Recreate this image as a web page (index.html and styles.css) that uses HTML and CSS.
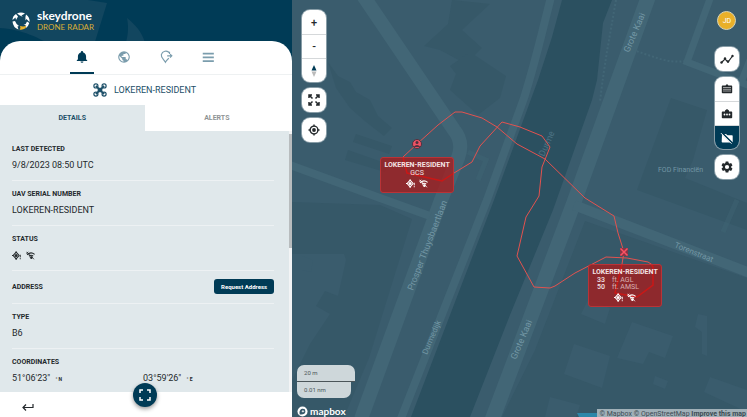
FILE: index.html
```html
<!DOCTYPE html>
<html lang="en">
<head>
    <meta charset="UTF-8">
    <meta name="viewport" content="width=device-width, initial-scale=1.0">
    <title>SkeyDrone - Drone Radar</title>
    <link rel="stylesheet" href="styles.css">
</head>
<body>
    <!-- shared icons -->
    <svg class="sprite" aria-hidden="true">
        <symbol id="icon-gps" viewBox="0 0 24 24">
            <path d="M11 1v3M11 20v3M0 12h3" stroke="currentColor" stroke-width="3" fill="none"/>
            <path d="M11 3l8 9-8 9-8-9z" fill="none" stroke="currentColor" stroke-width="3" stroke-linejoin="round"/>
            <circle cx="11" cy="12" r="4" fill="currentColor"/>
            <path d="M22 10v7M22 19v3" stroke="currentColor" stroke-width="2.5"/>
        </symbol>
        <symbol id="icon-nosignal" viewBox="0 0 24 24">
            <path d="M3 10C9 4 17 4 23 9M8 14c3-3 8-3 11 0" fill="none" stroke="currentColor" stroke-width="3"/>
            <path d="M11 17l3-1.500 3 1.500-3 4zM1 2l20 20" fill="currentColor" stroke="currentColor" stroke-width="2.500"/>
            <path d="M1 7l5-5" stroke="currentColor" stroke-width="2"/>
        </symbol>
    </svg>

    <div class="app">
        <aside class="sidebar">
            <header class="brand">
                <svg class="brand-bg" viewBox="0 0 292 66" preserveAspectRatio="xMinYMin slice" aria-hidden="true">
                    <path d="M0 0H88L107 3 93 48H54C42 38 20 29 0 28z"/>
                    <path d="M127 18C138 27 144 35 146 48H124C128 38 129 28 127 18z"/>
                </svg>
                <svg class="brand-logo" viewBox="0 0 18 18" aria-hidden="true">
                    <g fill="#fff">
                        <path d="M5 1.500Q9-.500 13 1.500L9.500 3.500 11 5Q7 3 5 1.500z"/>
                        <path d="M14 2.500Q18 5 17.500 10L14.500 7 13.500 8.500Q13 5 14 2.500z"/>
                        <path d="M4 2L6 4.500 4 8 3.500 5.500.500 8Q.500 4 4 2z"/>
                        <path d="M.500 9.500L3 9Q4 12 7 14L5.500 14.500 6.500 17.500Q1 15.500.500 9.500z"/>
                        <path d="M17.300 11Q16.500 14 14 16L13.500 13 11.500 13Q14.500 12 15 9.500z"/>
                    </g>
                    <path d="M8 14Q12 15 14.500 13.500L13.500 16.200Q10.500 18.200 7.500 17.500L8.500 16z" fill="#e9b32b"/>
                </svg>
                <div class="brand-text">
                    <span class="brand-name">skeydrone</span>
                    <span class="brand-product">DRONE RADAR</span>
                </div>
            </header>

            <section class="panel">
                <nav class="nav">
                    <button class="nav-item active" aria-label="Notifications">
                        <svg viewBox="0 0 24 24"><path fill="currentColor" d="M12 22a2.500 2.500 0 0 0 2.500-2.500h-5A2.500 2.500 0 0 0 12 22zm7-6v-5c0-3.500-2-6-5-6.800V3.500a2 2 0 0 0-4 0v.7C7 5 5 7.500 5 11v5l-2 2v1h18v-1z"/></svg>
                    </button>
                    <button class="nav-item" aria-label="World">
                        <svg viewBox="0 0 24 24"><path fill="currentColor" d="M12 2a10 10 0 1 0 0 20 10 10 0 0 0 0-20zm-1 17.930A8 8 0 0 1 4.210 10.210L9 15v1a2 2 0 0 0 2 2zm6.900-2.540A2 2 0 0 0 16 16h-1v-3a1 1 0 0 0-1-1H8v-2h2a1 1 0 0 0 1-1V7h2a2 2 0 0 0 2-2v-.410a8 8 0 0 1 2.900 12.800z"/></svg>
                    </button>
                    <button class="nav-item" aria-label="Area">
                        <svg viewBox="0 0 24 24" fill="none" stroke="currentColor" stroke-width="2"><path d="M18 5A8 8 0 0 0 4 8c-1 5 4 8 7 13 2-4 4-5 6-7M14 10h8M19 7l3 3-3 3M18 3v4"/></svg>
                    </button>
                    <button class="nav-item" aria-label="Menu">
                        <svg viewBox="0 0 24 24" stroke="currentColor" stroke-width="3"><path d="M3 6h19M3 12.500h19M3 19h19"/></svg>
                    </button>
                </nav>

                <h1 class="drone-title">
                    <svg viewBox="0 0 24 24" fill="none" stroke="currentColor" stroke-width="2" aria-hidden="true">
                        <circle cx="5" cy="5" r="3.500"/><circle cx="19" cy="5" r="3.500"/>
                        <circle cx="5" cy="19" r="3.500"/><circle cx="19" cy="19" r="3.500"/>
                        <path d="M5 5l14 14M19 5L5 19" stroke-width="3"/>
                        <path d="M9 9h6v6H9z" fill="currentColor"/>
                    </svg>
                    LOKEREN-RESIDENT
                </h1>

                <div class="tabs">
                    <button class="tab selected">DETAILS</button>
                    <button class="tab">ALERTS</button>
                </div>

                <div class="details">
                    <dl class="detail-list">
                        <div class="row">
                            <dt>LAST DETECTED</dt>
                            <dd>9/8/2023 08:50 UTC</dd>
                        </div>
                        <div class="row">
                            <dt>UAV SERIAL NUMBER</dt>
                            <dd>LOKEREN-RESIDENT</dd>
                        </div>
                        <div class="row">
                            <dt>STATUS</dt>
                            <dd class="status">
                                <svg><use href="#icon-gps"/></svg>
                                <svg><use href="#icon-nosignal"/></svg>
                            </dd>
                        </div>
                        <div class="row row-inline">
                            <dt>ADDRESS</dt>
                            <dd><button class="request">Request Address</button></dd>
                        </div>
                        <div class="row">
                            <dt>TYPE</dt>
                            <dd>B6</dd>
                        </div>
                        <div class="row">
                            <dt>COORDINATES</dt>
                            <dd class="coords">
                                <span>51°06'23" <b>° N</b></span>
                                <span>03°59'26" <b>° E</b></span>
                            </dd>
                        </div>
                    </dl>
                    <div class="scrollbar"><div class="thumb"></div></div>
                </div>

                <footer class="footer">
                    <button class="back" aria-label="Back">
                        <svg viewBox="0 0 12 8" fill="none" stroke="currentColor" stroke-width="1.200"><path d="M11 1v3.500H1M4 1.500l-3 3 3 3"/></svg>
                    </button>
                    <button class="focus" aria-label="Focus drone">
                        <svg viewBox="0 0 12 12" fill="none" stroke="currentColor" stroke-width="1.500"><path d="M1 4V1h3M8 1h3v3M11 8v3H8M4 11H1V8"/></svg>
                    </button>
                </footer>
            </section>
        </aside>

        <main class="map">
            <svg class="layer" viewBox="292 0 455 417" preserveAspectRatio="xMinYMin slice">
                <rect x="292" width="455" height="417" fill="#3a5c6d"/>
                <!-- buildings -->
                <g fill="#365868">
                    <path d="M452 0L490 4 462 30 482 48 466 64 440 50 424 46 448 24z"/>
                    <path d="M470 52L506 76 500 98 478 115 450 90 456 74 450 66z"/>
                    <path d="M328 62l10 14 12 6 6 10 14 8 8 16 14 12-8 8-18-14-16-14-14-20z"/>
                    <path d="M356 134l36 12-3 8-36-12zM348 150l40 14-3 8-40-12z"/>
                    <path d="M292 202L380 205 412 219 369 358 344 417 292 417 292 380 310 344 330 314 316 306 325 291 338 296 346 260 344 254 292 254z"/>
                    <path d="M671 98L707 110 693 160 685 178 747 203V230L637 190 645 168z"/>
                    <path d="M585 221L747 278V417H502L535 350z"/>
                </g>
                <g fill="#3a5c6d">
                    <path d="M588 300l22 8-5 16-24-10zM632 322l41 14-8 22-16-6-6 12-26-6zM574 344l36 12-8 32-38-14zM302 256l11 4-2 12-9-2zM550 397l30 8-4 12H545zM710 377l37 13v22l-43-20zM698 314l9 2v40l-5-2v-22l-7-5zM655 376l13 5-3 8-12-5z"/>
                </g>
                <!-- river Durme -->
                <path fill="#2b5060" d="M562 0L552 37 538 80 494 200 411 417H470L510 315 553 210 592 100 597 80 603 23 612 0z"/>
                <g fill="none" stroke="#426676">
                    <path stroke-width="14" d="M362-6L454 130Q464 142 458 158L441 200 361 419"/>
                    <path stroke-width="8" d="M551-3C541 36 536 60 524 98L487 200 400 421"/>
                    <path stroke-width="15" d="M649-5L573 205 492 420"/>
                    <path stroke-width="10" d="M574 205L750 273"/>
                    <path stroke-width="7" d="M711-4L687 62 750 86M742 80L750 60"/>
                    <path stroke-width="8" d="M290 165L380 198 430 216"/>
                    <path stroke-width="2" stroke-dasharray="2 2" d="M616 0C610 35 604 65 600 102M633 50L657 58Q672 63 686 61"/>
                    <path stroke-width="5" opacity=".4" d="M737 200L723 232M468 152l18 8-8 20"/>
                </g>
                <g class="street" fill="#7397a5">
                    <text transform="translate(413 291) rotate(-69)" font-size="9">Prosper Thuysbaertlaan</text>
                    <text transform="translate(427 355) rotate(-67)" font-size="8">Durmedijk</text>
                    <text transform="translate(629 53) rotate(-67)" font-size="9">Grote Kaai</text>
                    <text transform="translate(516 360) rotate(-67)" font-size="9">Grote Kaai</text>
                    <text transform="translate(674 247) rotate(22)" font-size="8">Torenstraat</text>
                    <text transform="translate(544 157) rotate(-66)" font-size="9" fill="#4b7384">Durme</text>
                    <text x="658" y="172" font-size="7">FOD Financiën</text>
                </g>
                <path fill="#2d87a9" d="M577 413h20v4h-18z"/>
                <!-- flight track -->
                <path fill="none" stroke="#e3524f" d="M417 144L403 157M472 162L480 146 502 122 520 127 542 136 550 147 542 167 539 196 526 217 517 256 534 287 550 288 555 286 575 273 606 257 627 258 648 262 651 264M622 264L624 252 618 233 614 216 585 198 545 159 517 144 497 127 482 118 462 112 455 112 438 125 417 144M454 173L472 162"/>
                <path fill="none" stroke="#ff1c1c" stroke-width="1.500" d="M403 157L407 173 442 181 454 173M651 264L653 267V285L637 297 615 293 622 264"/>
                <circle cx="417" cy="144" r="4.500" fill="#ef5364" stroke="#51313f"/>
                <circle cx="417" cy="142.500" r="1.500" fill="#51313f"/>
                <path d="M413.500 147q3.500-4 7 0z" fill="#51313f"/>
                <path d="M620 248h8v8h-8z" fill="#8a3445"/>
                <path d="M620.500 248.500l7 7M627.500 248.500l-7 7" stroke="#fb5263" stroke-width="1.500"/>
            </svg>

            <div class="tag tag-gcs">
                <strong>LOKEREN-RESIDENT</strong>
                <span>GCS</span>
                <div class="tag-icons">
                    <svg><use href="#icon-gps"/></svg>
                    <svg><use href="#icon-nosignal"/></svg>
                </div>
            </div>

            <div class="tag tag-drone">
                <strong>LOKEREN-RESIDENT</strong>
                <div class="altitude">
                    <b>33</b><span>ft. AGL</span>
                    <b>50</b><span>ft. AMSL</span>
                </div>
                <div class="tag-icons">
                    <svg><use href="#icon-gps"/></svg>
                    <svg><use href="#icon-nosignal"/></svg>
                </div>
            </div>

            <div class="controls controls-left">
                <div class="group">
                    <button aria-label="Zoom in">+</button>
                    <button aria-label="Zoom out">-</button>
                    <button aria-label="Reset north">
                        <svg viewBox="0 0 12 12"><path d="M6 0l2.500 5.500h-5z" fill="#003b56"/><path d="M6 12l2.500-5.500h-5z" fill="#bbb"/></svg>
                    </button>
                </div>
                <div class="group">
                    <button aria-label="Fullscreen">
                        <svg viewBox="0 0 12 12" fill="none" stroke="currentColor" stroke-width="1.500"><path d="M1 4V1h3M8 1h3v3M11 8v3H8M4 11H1V8M1 1l3.500 3.500M11 1L7.500 4.500M11 11L7.500 7.500M1 11l3.500-3.500"/></svg>
                    </button>
                </div>
                <div class="group">
                    <button aria-label="Locate">
                        <svg viewBox="0 0 12 12" fill="none" stroke="currentColor" stroke-width="1.400"><circle cx="6" cy="6" r="3.900"/><circle cx="6" cy="6" r="1.900" fill="currentColor" stroke="none"/><path d="M6 .500v2M6 9.500v2M.500 6h2M9.500 6h2"/></svg>
                    </button>
                </div>
            </div>

            <div class="controls controls-right">
                <button class="avatar">JD</button>
                <div class="group">
                    <button aria-label="Tracks">
                        <svg viewBox="0 0 14 14"><path d="M1.500 10.500L5 7l3 3 4.500-6" fill="none" stroke="currentColor" stroke-width="1.200"/><g fill="currentColor"><circle cx="1.500" cy="10.500" r="1.200"/><circle cx="5" cy="6.500" r="1.200"/><circle cx="8" cy="9.500" r="1.200"/><circle cx="12.500" cy="4" r="1.200"/></g></svg>
                    </button>
                </div>
                <div class="group">
                    <button aria-label="Detailed tags">
                        <svg viewBox="0 0 14 14"><path fill="currentColor" d="M5.500 3.500L7 2l1.500 1.500H11.500q.700 0 .700.700V5.500v5q0 .800-.800.800H2.600q-.800 0-.800-.800V4.200q0-.700.700-.700z"/><path d="M3 5.500h8M3 7.300h8M3 9h8" stroke="#bbb" stroke-width=".8"/></svg>
                    </button>
                    <button aria-label="Compact tags">
                        <svg viewBox="0 0 14 14"><path fill="currentColor" d="M5 4.500V3.500L7 2l2 1.500v1h2.500q.700 0 .700.700v5.200q0 .800-.800.800H2.600q-.800 0-.800-.800V5.200q0-.700.700-.700z"/><g fill="#fff"><circle cx="4.500" cy="7.500" r=".9"/><circle cx="7" cy="7.500" r=".9"/><circle cx="9.500" cy="7.500" r=".9"/></g></svg>
                    </button>
                    <button class="on" aria-label="Hide tags">
                        <svg viewBox="0 0 14 14"><path fill="currentColor" d="M2 3h4l1.500 1.200H12q.700 0 .700.700V11.500H2.500Q1.700 11.500 1.700 10.800z"/><path d="M1.500 1.500l11 11" stroke="#003b56" stroke-width="2"/><path d="M1 2.200l10.500 10.500" stroke="currentColor"/></svg>
                    </button>
                </div>
                <div class="group">
                    <button aria-label="Settings">
                        <svg viewBox="0 0 24 24"><path fill="currentColor" fill-rule="evenodd" d="M19.140 12.940a7 7 0 0 0 0-1.880l2.030-1.580a.5.5 0 0 0 .120-.610l-1.920-3.320a.5.5 0 0 0-.590-.220l-2.390.960a7 7 0 0 0-1.620-.940l-.360-2.540A.5.5 0 0 0 13.930 2.400h-3.860a.5.5 0 0 0-.480.410l-.360 2.540a7 7 0 0 0-1.620.940l-2.390-.960a.5.5 0 0 0-.590.220L2.710 8.870a.5.5 0 0 0 .120.610l2.030 1.580a7 7 0 0 0 0 1.880l-2.030 1.580a.5.5 0 0 0-.120.610l1.920 3.320c.120.220.370.290.590.220l2.390-.960a7 7 0 0 0 1.620.940l.360 2.540c.050.240.240.410.480.410h3.860c.240 0 .440-.170.480-.410l.360-2.540a7 7 0 0 0 1.620-.940l2.390.960c.220.080.470 0 .590-.220l1.920-3.320a.5.5 0 0 0-.120-.610zM12 15.600a3.600 3.600 0 1 1 0-7.200 3.600 3.600 0 0 1 0 7.200z"/></svg>
                    </button>
                </div>
            </div>

            <div class="map-info">
                <div class="scale scale-metric">20 m</div>
                <div class="scale scale-nautical">0.01 nm</div>
                <a class="mapbox" href="#">
                    <svg viewBox="0 0 12 12" aria-hidden="true"><circle cx="6" cy="6" r="5.500" fill="#fff"/><path d="M3 9.200C2 5 4 3 6.500 3a2.700 2.700 0 0 1 2.700 2.700C9.200 8.500 6.500 9.800 3 9.200z" fill="#35576a"/><path d="M6.500 4l.5 1.200 1.200.5-1.200.5-.5 1.200L6 6.200l-1.200-.5L6 5.200z" fill="#fff"/></svg>
                    mapbox
                </a>
            </div>

            <div class="attribution">
                <a href="#">© Mapbox</a> <a href="#">© OpenStreetMap</a> <a href="#"><b>Improve this map</b></a>
            </div>
        </main>
    </div>
</body>
</html>
```

FILE: styles.css
```css
* {
    box-sizing: border-box;
}

body {
    margin: 0;
    font-family: Roboto, Arial, sans-serif;
    color: #24292c;
    overflow: hidden;
}

button {
    padding: 0;
    border: none;
    background: none;
    font-family: inherit;
    color: inherit;
    cursor: pointer;
}

svg {
    display: block;
}

a {
    color: inherit;
    text-decoration: none;
}

.sprite {
    position: absolute;
    width: 0;
    height: 0;
}

.app {
    display: grid;
    grid-template-columns: 391fr 609fr;
    height: 100vh;
}

/* sidebar */
.sidebar {
    display: flex;
    flex-direction: column;
    min-width: 0;
    min-height: 0;
    background-color: #003b56;
    position: relative;
}

.brand {
    display: flex;
    align-items: center;
    gap: 7px;
    height: 41px;
    padding-left: 12px;
    flex-shrink: 0;
}

.brand-bg {
    position: absolute;
    top: 0;
    left: 0;
    width: 100%;
    height: 66px;
    fill: #12465f;
}

.brand-logo {
    width: 18px;
    height: 18px;
    position: relative;
}

.brand-text {
    display: flex;
    flex-direction: column;
    font-family: Lato, sans-serif;
    position: relative;
}

.brand-name {
    font-size: 12px;
    line-height: 12px;
    font-weight: bold;
    color: #fff;
}

.brand-product {
    font-size: 8px;
    line-height: 10px;
    color: #d9ae35;
}

.panel {
    display: flex;
    flex-direction: column;
    flex: 1;
    min-height: 0;
    position: relative;
    background-color: #fff;
    border-radius: 20px 20px 0 0;
}

.nav,
.drone-title,
.tabs {
    padding-right: 3px;
}

.nav {
    display: flex;
    justify-content: center;
    gap: 18px;
    height: 34px;
    flex-shrink: 0;
    border-bottom: 1px solid #eef1f2;
}

.nav-item {
    display: flex;
    align-items: center;
    justify-content: center;
    width: 24px;
    color: #7b9dad;
    border-bottom: 2px solid transparent;
}

.nav-item svg {
    width: 14px;
    height: 14px;
}

.nav-item.active {
    color: #003b56;
    border-color: #003b56;
}

.drone-title {
    display: flex;
    align-items: center;
    justify-content: center;
    gap: 7px;
    height: 30px;
    margin: 0;
    font-size: 9px;
    font-weight: normal;
    color: #1c4f68;
    flex-shrink: 0;
}

.drone-title svg {
    width: 14px;
    height: 14px;
}

.tabs {
    display: flex;
    height: 26px;
    flex-shrink: 0;
}

.tab {
    flex: 1;
    font-size: 7px;
    font-weight: bold;
    color: #909495;
}

.tab.selected {
    background-color: #e0e8eb;
    color: #1c4f68;
}

.details {
    flex: 1;
    min-height: 0;
    overflow: hidden;
    position: relative;
    padding: 5px 18px 0 12px;
    background-color: #e0e8eb;
}

.detail-list {
    margin: 0;
}

.row {
    padding: 8px 0 9px;
    border-bottom: 1px solid #edf1f3;
}

.row dt {
    font-size: 7px;
    line-height: 10px;
    font-weight: bold;
}

.row dd {
    margin: 5px 0 0;
    font-size: 9px;
    line-height: 12px;
}

.row .status {
    display: flex;
    align-items: center;
    gap: 5px;
    height: 12px;
}

.status svg {
    width: 9px;
    height: 9px;
}

.row-inline {
    display: flex;
    align-items: center;
    justify-content: space-between;
}

.row-inline dd {
    margin: 0;
}

.request {
    display: block;
    height: 15px;
    padding: 0 7px;
    border-radius: 3px;
    background-color: #003b56;
    color: #fff;
    font-size: 6px;
    font-weight: bold;
}

.row .coords {
    display: grid;
    grid-template-columns: 1fr 1fr;
}

.coords b {
    font-size: 5px;
    margin-left: 3px;
}

.scrollbar {
    position: absolute;
    top: 0;
    right: 0;
    bottom: 0;
    width: 3px;
    padding-top: 3px;
    background-color: #f3f4f5;
}

.thumb {
    height: 44%;
    background-color: #b8bcbe;
}

.footer {
    display: flex;
    align-items: center;
    height: 25px;
    padding-left: 22px;
    position: relative;
    flex-shrink: 0;
}

.back svg {
    width: 12px;
    height: 8px;
    margin-top: 5px;
}

.focus {
    display: flex;
    align-items: center;
    justify-content: center;
    position: absolute;
    top: -9px;
    left: calc(50% - 13px);
    width: 24px;
    height: 24px;
    border-radius: 50%;
    background-color: #003b56;
    color: #fff;
    box-shadow: 0 2px 4px rgba(0, 0, 0, 0.4);
}

.focus svg {
    width: 12px;
    height: 12px;
}

/* map */
.map {
    position: relative;
    overflow: hidden;
    background-color: #3a5c6d;
}

.layer {
    position: absolute;
    top: 0;
    left: 0;
    width: 100%;
    height: 100%;
}

.street {
    font-family: Roboto, sans-serif;
}

.tag {
    position: absolute;
    width: 74px;
    padding: 3px 0;
    border: 1px solid #b93337;
    border-radius: 3px;
    background-color: rgba(180, 22, 20, 0.7);
    color: #f3e3e4;
    font-size: 7px;
    line-height: 8px;
    text-align: center;
}

.tag strong,
.tag > span {
    display: block;
}

.tag strong {
    white-space: nowrap;
}

.tag-gcs {
    top: 157px;
    left: 88px;
}

.tag-drone {
    top: 264px;
    left: 296px;
}

.altitude {
    display: grid;
    grid-template-columns: auto 1fr;
    column-gap: 7px;
    padding: 1px 0 0 8px;
    line-height: 7px;
    text-align: left;
}

.altitude b {
    font-weight: 500;
}

.altitude span {
    color: #d9b0b2;
}

.tag-icons {
    display: flex;
    justify-content: center;
    gap: 4px;
    padding: 2px 0 1px;
    color: #fff;
}

.tag-icons svg {
    width: 9px;
    height: 9px;
}

.controls {
    position: absolute;
    display: flex;
    flex-direction: column;
}

.controls-left {
    top: 10px;
    left: 10px;
    gap: 6px;
}

.controls-right {
    top: 11px;
    right: 8px;
    gap: 6px;
}

.group {
    width: 24px;
    border-radius: 8px;
    background-color: #fff;
    overflow: hidden;
    box-shadow: 0 0 0 1px rgba(255, 255, 255, 0.4);
}

.group button {
    display: flex;
    align-items: center;
    justify-content: center;
    width: 100%;
    height: 24px;
    font-size: 11px;
    font-weight: 500;
}

.group button + button {
    border-top: 1px solid #d5d8da;
}

.group svg {
    width: 12px;
    height: 12px;
}

.controls-right svg {
    width: 14px;
    height: 14px;
}

.group .on {
    background-color: #003b56;
    color: #fff;
}

.avatar {
    width: 19px;
    height: 19px;
    margin: 0 auto 11px;
    border: 1px solid #d8d3b5;
    border-radius: 50%;
    background-color: #e9b029;
    color: #fff;
    font-size: 7px;
}

.map-info {
    position: absolute;
    left: 5px;
    bottom: 0;
}

.scale {
    padding: 0 7px;
    font-size: 6px;
    line-height: 16px;
    color: #4b5559;
    background-color: #ced7da;
}

.scale-metric {
    width: 58px;
    border-bottom: 1px solid #4b5559;
    border-radius: 7px 7px 0 0;
}

.scale-nautical {
    width: 54px;
    border-radius: 0 0 7px 7px;
}

.mapbox {
    display: flex;
    align-items: center;
    gap: 2px;
    height: 12px;
    margin-top: 7px;
    font: bold 10px/12px Lato, sans-serif;
    color: #fff;
}

.mapbox svg {
    width: 11px;
    height: 11px;
}

.attribution {
    position: absolute;
    right: 0;
    bottom: -2px;
    padding: 0 1px 0 3px;
    font-size: 7px;
    line-height: 10px;
    white-space: nowrap;
    color: #3b4a52;
    background-color: #a0b0b8;
}
```
